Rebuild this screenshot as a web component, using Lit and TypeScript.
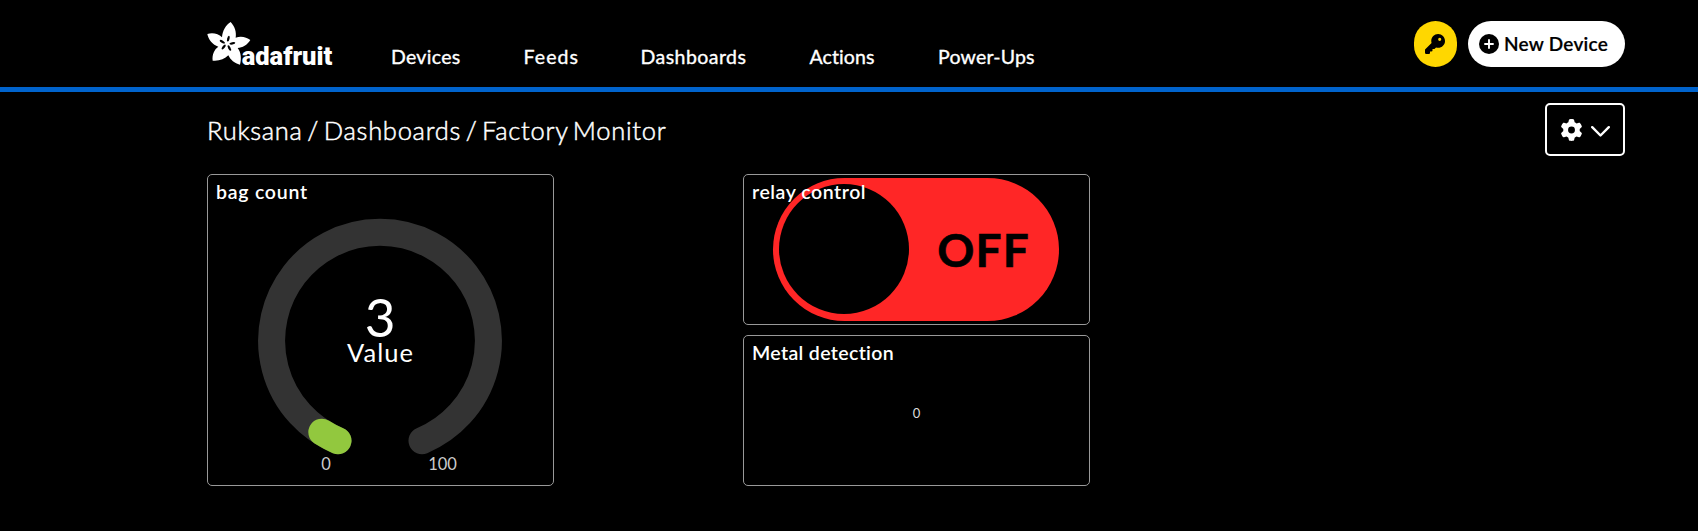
import { LitElement, html, css, svg } from "lit";

const NAV = [
  { label: "Devices", track: 0.3 },
  { label: "Feeds", track: 1.1 },
  { label: "Dashboards", track: 0.45 },
  { label: "Actions", track: 0.1 },
  { label: "Power-Ups", track: 0.2 },
];

class AdaLogo extends LitElement {
  static styles = css`
    :host { display: block; width: 140px; height: 56px; }
    svg { display: block; overflow: visible; }
    text { font: 900 80px Roboto, Inter, sans-serif; }
  `;
  render() {
    return html`<svg width="140" height="56" viewBox="0 0 420 168" fill="#fff">
      <path d="M92 21 C104 34 110 51 107 68 C122 62 140 66 151 75 C142 90 127 98 113 99 C123 111 125 132 120 149 C104 146 91 134 85 121 C74 133 56 139 38 137 C36 119 42 104 55 95 C38 89 25 74 22 57 C38 52 55 56 66 67 C67 48 77 30 92 21Z"/>
      <g fill="#000">
        <ellipse cx="85" cy="71" rx="3.6" ry="9" transform="rotate(14 85 71)"/>
        <ellipse cx="97" cy="85" rx="3.6" ry="9" transform="rotate(80 97 85)"/>
        <ellipse cx="88" cy="99" rx="3.6" ry="9" transform="rotate(-28 88 99)"/>
        <ellipse cx="71" cy="96" rx="3.6" ry="9" transform="rotate(38 71 96)"/>
        <ellipse cx="67" cy="80" rx="3.6" ry="9" transform="rotate(-60 67 80)"/>
      </g>
      <text x="125" y="149" textLength="272" lengthAdjust="spacingAndGlyphs">adafruit</text>
    </svg>`;
  }
}
customElements.define("ada-logo", AdaLogo);

class DashGauge extends LitElement {
  static styles = css`
    :host { display: block; }
    svg { display: block; }
    text { font-family: Lato, sans-serif; fill: #fff; text-anchor: middle; }
    .value { font-size: 53px; }
    .label { font-size: 25.5px; letter-spacing: 1px; }
    .limit { font-size: 16.5px; fill: #ccc; }
  `;
  render() {
    const arc = (x1: number, y1: number, x2: number, y2: number, large: number, color: string) =>
      svg`<path d="M${x1} ${y1} A108.4 108.4 0 ${large} 1 ${x2} ${y2}" fill="none" stroke=${color} stroke-width="27" stroke-linecap="round"/>`;
    return html`<svg width="345" height="310" viewBox="208 175 345 310">
      ${arc(338, 440.7, 422, 440.7, 1, "#333")}
      ${arc(338, 440.7, 321.8, 432.2, 0, "#92c83e")}
      <text class="value" x="380" y="337">3</text>
      <text class="label" x="380.5" y="362">Value</text>
      <text class="limit" x="326" y="469.500">0</text>
      <text class="limit" x="442.500" y="469.500">100</text>
    </svg>`;
  }
}
customElements.define("dash-gauge", DashGauge);

class AppRoot extends LitElement {
  static styles = css`
    :host { display: block; height: 531px; overflow: hidden; background: #000; color: #fff; font-family: Lato, "Open Sans", sans-serif; }
    * { box-sizing: border-box; }
    .header { height: 92px; border-bottom: 5px solid #0063cc; padding: 0 73px 0 200px; display: flex; }
    .logo { padding-top: 15px; width: 191px; }
    .nav { display: grid; grid-template-columns: 132.5px 117px 169px 128.5px 120px; padding-top: 45px; font-size: 19.5px; line-height: 24px; -webkit-text-stroke: 0.35px #fff; }
    .actions { margin-left: auto; padding-top: 21px; display: flex; gap: 11px; }
    .key { width: 43px; height: 46px; border-radius: 23px; background: #ffd700; display: grid; place-items: center; padding: 0 1px 1px 0; }
    .new { width: 157px; height: 46px; border-radius: 23px; background: #fff; color: #000; display: flex; align-items: center; padding: 0 0 1px 11px; gap: 5px; font-size: 19px; font-weight: 600; letter-spacing: 0.25px; white-space: nowrap; -webkit-text-stroke: 0.2px #000; }
    .bar { display: flex; justify-content: space-between; padding: 11px 73px 0 207px; height: 82px; }
    .crumbs { padding-top: 11px; font-size: 25.5px; line-height: 32px; font-weight: 300; letter-spacing: 0.72px; word-spacing: -3px; -webkit-text-stroke: 0.5px #fff; white-space: pre; }
    .gear { width: 80px; height: 53px; border: 2px solid #fff; border-radius: 5px; display: flex; align-items: center; padding-left: 14px; gap: 9px; }
    .chevron { margin-top: 3px; }
    .board { display: grid; grid-template-columns: 347px 347px; column-gap: 189px; padding-left: 207px; align-items: start; }
    .stack { display: grid; row-gap: 10px; }
    .card { position: relative; border: 1px solid #999; border-radius: 5px; height: 151px; }
    .card.tall { height: 312px; }
    .title { position: absolute; left: 8px; top: 4px; font-size: 19.5px; line-height: 26px; font-weight: 600; white-space: nowrap; }
    .center { height: 100%; display: flex; align-items: center; justify-content: center; }
    .toggle { width: 286px; height: 143px; border-radius: 72px; background: #ff2626; padding: 6px 31px 6px 6px; display: flex; align-items: center; justify-content: space-between; margin: -1px 1px 0 0; }
    .knob { width: 130px; height: 130px; border-radius: 50%; background: #000; }
    .state { color: #000; font-weight: 700; font-size: 46px; letter-spacing: 1.2px; margin: 0 -2px 0 0; -webkit-text-stroke: 0.6px #000; }
    .reading { font-size: 13px; color: #ddd; padding-top: 5px; }
  `;
  cardTitle(text: string, track: number) {
    return html`<div class="title" style="letter-spacing:${track}px">${text}</div>`;
  }
  render() {
    return html`
      <div class="header">
        <div class="logo"><ada-logo></ada-logo></div>
        <div class="nav">${NAV.map((n) => html`<span style="letter-spacing:${n.track}px">${n.label}</span>`)}</div>
        <div class="actions">
          <div class="key"><svg width="20" height="20" viewBox="0 0 512 512"><path d="M336 352c97.200 0 176-78.800 176-176S433.200 0 336 0S160 78.800 160 176c0 18.700 2.900 36.800 8.300 53.700L7 391c-4.500 4.500-7 10.600-7 17v80c0 13.300 10.700 24 24 24h80c13.300 0 24-10.700 24-24v-40h40c13.300 0 24-10.700 24-24v-40h40c6.400 0 12.500-2.500 17-7l33.300-33.300c16.900 5.400 35 8.300 53.700 8.300zM376 96a40 40 0 1 1 0 80 40 40 0 1 1 0-80z"/></svg></div>
          <div class="new"><svg width="20" height="20" viewBox="0 0 20 20"><circle cx="10" cy="10" r="10"/><path d="M10 6v8M6 10h8" stroke="#fff" stroke-width="1.900" stroke-linecap="round"/></svg>New Device</div>
        </div>
      </div>
      <div class="bar">
        <div class="crumbs">Ruksana / Dashboards / Factory Monitor</div>
        <div class="gear">
          <svg width="21" height="22" viewBox="16 0 480 512" fill="#fff"><path d="M495.900 166.600c3.200 8.700 .5 18.400-6.400 24.600l-43.300 39.400c1.100 8.300 1.700 16.800 1.700 25.400s-.6 17.100-1.700 25.400l43.300 39.400c6.900 6.200 9.600 15.900 6.400 24.600c-4.400 11.900-9.700 23.300-15.800 34.300l-4.700 8.100c-6.600 11-14 21.400-22.100 31.200c-5.900 7.200-15.700 9.600-24.500 6.800l-55.700-17.700c-13.400 10.300-28.200 18.900-44 25.400l-12.500 57.100c-2 9.100-9 16.300-18.200 17.800c-13.800 2.300-28 3.500-42.500 3.500s-28.700-1.200-42.500-3.500c-9.200-1.500-16.200-8.700-18.200-17.800l-12.500-57.100c-15.800-6.500-30.600-15.100-44-25.400L83.100 425.900c-8.800 2.800-18.600 .3-24.500-6.800c-8.100-9.800-15.500-20.200-22.100-31.200l-4.700-8.100c-6.100-11-11.400-22.400-15.800-34.300c-3.200-8.700-.5-18.400 6.400-24.600l43.300-39.400C64.600 273.100 64 264.600 64 256s.6-17.100 1.700-25.400L22.400 191.200c-6.900-6.200-9.600-15.900-6.400-24.600c4.400-11.900 9.700-23.300 15.800-34.300l4.700-8.100c6.600-11 14-21.400 22.100-31.200c5.900-7.200 15.700-9.600 24.500-6.800l55.700 17.700c13.400-10.300 28.200-18.900 44-25.400l12.500-57.100c2-9.100 9-16.300 18.200-17.800C227.300 1.200 241.500 0 256 0s28.700 1.200 42.500 3.500c9.200 1.500 16.200 8.700 18.200 17.800l12.500 57.100c15.800 6.500 30.600 15.100 44 25.400l55.700-17.700c8.800-2.800 18.600-.3 24.500 6.800c8.100 9.800 15.500 20.200 22.100 31.200l4.700 8.100c6.100 11 11.400 22.400 15.800 34.300zM256 336a80 80 0 1 0 0-160 80 80 0 1 0 0 160z"/></svg>
          <svg class="chevron" width="19" height="11" viewBox="0 0 19 11"><path d="M1.200 1.200L9.500 9.500L17.800 1.200" fill="none" stroke="#fff" stroke-width="2.400" stroke-linecap="round" stroke-linejoin="round"/></svg>
        </div>
      </div>
      <div class="board">
        <div class="card tall"><dash-gauge></dash-gauge>${this.cardTitle("bag count", 0.75)}</div>
        <div class="stack">
          <div class="card"><div class="center"><div class="toggle"><div class="knob"></div><div class="state">OFF</div></div></div>${this.cardTitle("relay control", 0.55)}</div>
          <div class="card"><div class="center"><span class="reading">0</span></div>${this.cardTitle("Metal detection", 0.35)}</div>
        </div>
      </div>
    `;
  }
}
customElements.define("app-root", AppRoot);
